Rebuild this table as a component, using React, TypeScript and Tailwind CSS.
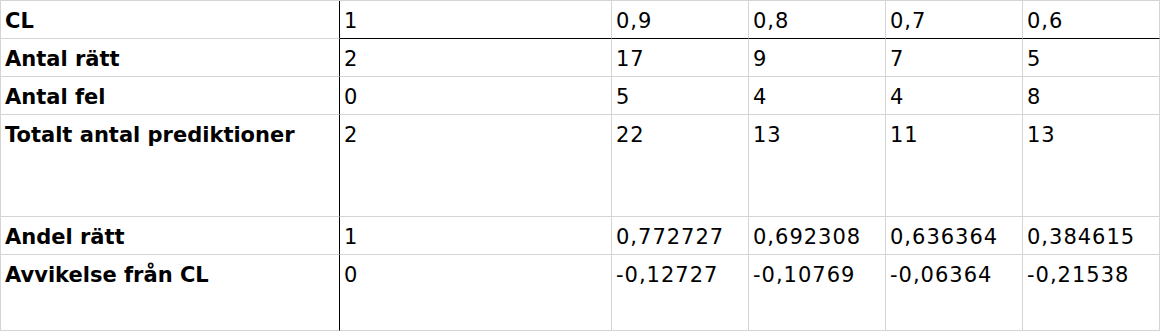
import React from "react";

const rows: { label: string; values: string[]; h: string }[] = [
  { label: "CL", values: ["1", "0,9", "0,8", "0,7", "0,6"], h: "h-[38px]" },
  { label: "Antal rätt", values: ["2", "17", "9", "7", "5"], h: "h-[38px]" },
  { label: "Antal fel", values: ["0", "5", "4", "4", "8"], h: "h-[38px]" },
  { label: "Totalt antal prediktioner", values: ["2", "22", "13", "11", "13"], h: "h-[102px]" },
  { label: "Andel rätt", values: ["1", "0,772727", "0,692308", "0,636364", "0,384615"], h: "h-[38px]" },
  { label: "Avvikelse från CL", values: ["0", "-0,12727", "-0,10769", "-0,06364", "-0,21538"], h: "h-[76px]" },
];

export default function App() {
  return (
    <div
      className="w-[1160px] h-[331px] bg-white text-black overflow-hidden"
      style={{ fontFamily: '"DejaVu Sans", sans-serif' }}
    >
      <div className="grid grid-cols-[339px_272px_137px_137px_137px_137px] border-t border-l border-[#d4d4d4]">
        {rows.map((row, ri) => (
          <React.Fragment key={row.label}>
            <div
              className={`${row.h} border-r border-r-black border-b border-[#d4d4d4] pl-[4px] pt-[8px] text-[21px] leading-[24px] font-bold whitespace-nowrap`}
            >
              {row.label}
            </div>
            {row.values.map((v, ci) => (
              <div
                key={ci}
                className={`${row.h} border-r border-[#d4d4d4] border-b ${
                  ri === 0 ? "border-b-black" : ""
                } pl-[4px] pt-[8px] text-[21px] leading-[24px] tracking-[1px] whitespace-nowrap`}
              >
                {v}
              </div>
            ))}
          </React.Fragment>
        ))}
      </div>
    </div>
  );
}
